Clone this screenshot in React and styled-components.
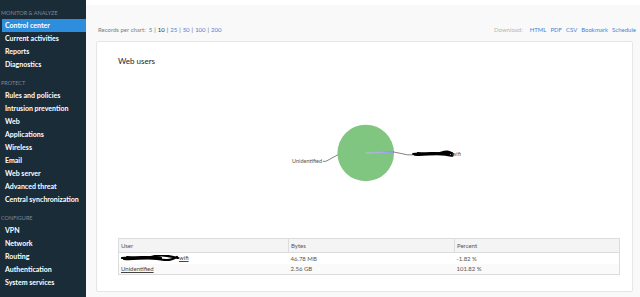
import React from 'react';
import styled, { createGlobalStyle } from 'styled-components';

const GlobalStyle = createGlobalStyle`
  html, body { margin: 0; padding: 0; }
  body {
    font-family: Lato, "Liberation Sans", sans-serif;
    background: #f9f9f9;
  }
`;

const Shell = styled.div`
  display: flex;
  width: 640px;
  height: 297px;
  overflow: hidden;
`;

const Sidebar = styled.nav`
  width: 86px;
  flex: none;
  background: #1b2c39;
  padding-top: 8px;
  box-sizing: border-box;
`;

const Section = styled.div`
  margin-bottom: 7px;
`;

const SectionTitle = styled.div`
  font-size: 5.5px;
  color: #7d8b96;
  text-transform: uppercase;
  height: 11px;
  line-height: 11px;
  padding-left: 1px;
`;

const NavItem = styled.div`
  height: 13px;
  line-height: 13px;
  margin-left: 2px;
  padding-left: 3px;
  font-size: 7px;
  font-weight: 700;
  color: #ffffff;
  white-space: nowrap;
  background: ${p => (p.$active ? '#2e8ede' : 'transparent')};
`;

const Main = styled.main`
  flex: 1;
  display: flex;
  flex-direction: column;
  border-top: 5px solid #ffffff;
  padding: 17px 7px 5px 10px;
  box-sizing: border-box;
  min-width: 0;
`;

const Toolbar = styled.div`
  display: flex;
  justify-content: space-between;
  align-items: center;
  height: 15px;
  font-size: 6px;
  padding-left: 2px;
  padding-right: 0;
  margin-right: -3px;
  margin-bottom: 4px;
`;

const Group = styled.div`
  display: flex;
  align-items: center;
  gap: ${p => p.$gap || 0}px;
`;

const Muted = styled.span`
  color: ${p => (p.$light ? '#b5b5b5' : '#7a7a7a')};
  margin-right: 3px;
`;

const Link = styled.span`
  color: ${p => (p.$current ? '#333' : '#3d86db')};
`;

const Sep = styled.span`
  color: #555;
  margin: 0 2px;
`;

const Panel = styled.section`
  flex: 1;
  background: #ffffff;
  border: 1px solid #e6e6e6;
  border-radius: 2px;
  padding: 13px 13px 0 21px;
  box-sizing: border-box;
  display: flex;
  flex-direction: column;
`;

const Title = styled.h2`
  margin: 0;
  font-size: 8px;
  font-weight: 400;
  color: #222;
  height: 12px;
  line-height: 12px;
`;

const ChartArea = styled.div`
  height: 171px;
  display: flex;
  justify-content: center;
`;

const Table = styled.table`
  width: 502px;
  border-collapse: collapse;
  font-size: 6px;
  color: #555;
`;

const Th = styled.th`
  text-align: left;
  font-weight: 400;
  background: #f4f4f4;
  border: 1px solid #dcdcdc;
  height: 13px;
  padding: 0 2px;
  width: ${p => p.$w}px;
`;

const Tr = styled.tr`
  background: ${p => (p.$alt ? '#fafafa' : '#fff')};
`;

const Td = styled.td`
  height: 10px;
  padding: 0 2px;
  border-left: ${p => (p.$first ? '1px solid #dcdcdc' : 'none')};
  border-right: ${p => (p.$last ? '1px solid #dcdcdc' : 'none')};
  border-bottom: ${p => (p.$bottom ? '1px solid #dcdcdc' : 'none')};
  line-height: 10px;
`;

const UserLink = styled.span`
  text-decoration: underline;
  color: #444;
  display: inline-flex;
  align-items: center;
`;

const Scribble = ({ width = 58 }) => (
  <svg width={width} height="6" viewBox="0 0 58 6" style={{ verticalAlign: 'middle' }}>
    <path d="M1 3 C10 1 20 5 30 2 S48 1 57 3 M3 4 C14 5 24 2 36 4 S50 5 56 2 M6 2 C18 3 28 1 40 3"
      stroke="#000" strokeWidth="2.2" fill="none" strokeLinecap="round" />
  </svg>
);

const PieChart = () => {
  const cx = 267, cy = 86, r = 30.5;
  const a1 = (-4 * Math.PI) / 180;
  return (
    <svg width="540" height="171" viewBox="0 0 540 171">
      <circle cx={cx} cy={cy} r={r} fill="#80c680" />
      <path d={`M${cx} ${cy} L${cx + r} ${cy} A${r} ${r} 0 0 0 ${cx + r * Math.cos(a1)} ${cy + r * Math.sin(a1)} Z`} fill="#7f7fe0" />
      <line x1={cx} y1={cy} x2={cx + r - 1} y2={cy - 1} stroke="#cfd8f5" strokeWidth="0.6" />
      <polyline points={`${cx - 30} ${cy + 2} ${cx - 43} ${cy + 9} ${cx - 46} ${cy + 9}`} stroke="#555" strokeWidth="0.8" fill="none" />
      <text x={cx - 47} y={cy + 11} fontSize="6" fill="#555" textAnchor="end" fontFamily="Lato, sans-serif">Unidentified</text>
      <polyline points={`${cx + r} ${cy - 1} ${cx + 45} ${cy + 2} ${cx + 52} ${cy + 2}`} stroke="#555" strokeWidth="0.8" fill="none" />
      <g transform={`translate(${cx + 50} ${cy - 2})`}>
        <path d="M1 3 C10 1 20 5 30 2 S40 1 44 3 M3 4 C14 5 24 2 36 4 S42 5 43 2 M6 2 C18 3 28 1 40 3 M12 3 C20 5 30 1 42 2"
          stroke="#000" strokeWidth="2.2" fill="none" strokeLinecap="round" />
      </g>
      <text x={cx + 93} y={cy + 3} fontSize="6" fill="#555" fontFamily="Lato, sans-serif">wifi</text>
    </svg>
  );
};

const sections = [
  { title: 'Monitor & Analyze', items: ['Control center', 'Current activities', 'Reports', 'Diagnostics'] },
  { title: 'Protect', items: ['Rules and policies', 'Intrusion prevention', 'Web', 'Applications', 'Wireless', 'Email', 'Web server', 'Advanced threat', 'Central synchronization'] },
  { title: 'Configure', items: ['VPN', 'Network', 'Routing', 'Authentication', 'System services'] },
];

const rows = [
  { user: 'wifi', redacted: true, bytes: '46.78 MB', percent: '-1.82 %' },
  { user: 'Unidentified', bytes: '2.56 GB', percent: '101.82 %' },
];

export default function App() {
  return (
    <>
      <GlobalStyle />
      <Shell>
        <Sidebar>
          {sections.map(s => (
            <Section key={s.title}>
              <SectionTitle>{s.title}</SectionTitle>
              {s.items.map(item => (
                <NavItem key={item} $active={item === 'Control center'}>{item}</NavItem>
              ))}
            </Section>
          ))}
        </Sidebar>
        <Main>
          <Toolbar>
            <Group>
              <Muted>Records per chart:</Muted>
              {['5', '10', '25', '50', '100', '200'].map((n, i) => (
                <React.Fragment key={n}>
                  {i > 0 && <Sep>|</Sep>}
                  <Link $current={n === '10'}>{n}</Link>
                </React.Fragment>
              ))}
            </Group>
            <Group $gap={4}>
              <Muted $light>Download:</Muted>
              <Link>HTML</Link>
              <Link>PDF</Link>
              <Link>CSV</Link>
              <Link>Bookmark</Link>
              <Link>Schedule</Link>
            </Group>
          </Toolbar>
          <Panel>
            <Title>Web users</Title>
            <ChartArea>
              <PieChart />
            </ChartArea>
            <Table>
              <thead>
                <tr>
                  <Th $w={165}>User</Th>
                  <Th $w={161}>Bytes</Th>
                  <Th>Percent</Th>
                </tr>
              </thead>
              <tbody>
                {rows.map((r, i) => (
                  <Tr key={r.user} $alt={i % 2 === 1}>
                    <Td $first $bottom={i === rows.length - 1}>
                      <UserLink>
                        {r.redacted && <Scribble />}
                        {r.user}
                      </UserLink>
                    </Td>
                    <Td $bottom={i === rows.length - 1}>{r.bytes}</Td>
                    <Td $last $bottom={i === rows.length - 1}>{r.percent}</Td>
                  </Tr>
                ))}
              </tbody>
            </Table>
          </Panel>
        </Main>
      </Shell>
    </>
  );
}
